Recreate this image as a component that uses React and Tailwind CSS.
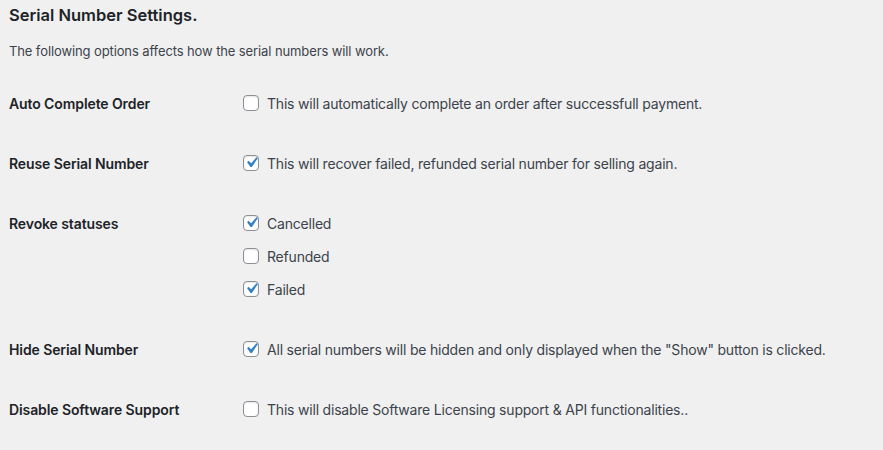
import React from "react";

function Box({ checked }) {
  return (
    <span className="relative inline-block w-4 h-4 shrink-0 rounded-[4px] border border-[#8c8f94] bg-white shadow-[inset_0_1px_2px_rgba(0,0,0,0.1)]">
      {checked && (
        <svg
          viewBox="0 0 20 20"
          className="absolute w-[21px] h-[21px] left-[-3px] top-[-4px]"
        >
          <path
            fill="#3582c4"
            d="M14.83 4.89l1.34.94-5.81 8.38H9.02L5.78 9.67l1.34-1.25 2.57 2.4z"
          />
        </svg>
      )}
    </span>
  );
}

function Item({ checked, children }) {
  return (
    <label className="flex items-center h-5 gap-2 text-[14px] tracking-[-0.2px] text-[#3c434a]">
      <Box checked={checked} />
      <span className="pt-px">{children}</span>
    </label>
  );
}

function Row({ label, children }) {
  return (
    <div className="flex py-5">
      <div className="w-[234px] shrink-0 h-5 pt-px flex items-center text-[14px] tracking-[-0.1px] font-semibold text-[#1d2327]">
        {label}
      </div>
      <div className="flex flex-col gap-[13px]">{children}</div>
    </div>
  );
}

export default function App() {
  return (
    <div
      className="min-h-[450px] bg-[#f0f0f1] pl-[9px]"
      style={{ fontFamily: "Inter, 'Noto Sans', sans-serif" }}
    >
      <h2 className="h-[30px] flex items-center text-[16.5px] font-semibold text-[#1d2327]">
        Serial Number Settings.
      </h2>
      <p className="mt-3 h-5 flex items-center text-[13px] tracking-[-0.11px] text-[#3c434a]">
        The following options affects how the serial numbers will work.
      </p>
      <div className="mt-[11px]">
        <Row label="Auto Complete Order">
          <Item>This will automatically complete an order after successfull payment.</Item>
        </Row>
        <Row label="Reuse Serial Number">
          <Item checked>This will recover failed, refunded serial number for selling again.</Item>
        </Row>
        <Row label="Revoke statuses">
          <Item checked>Cancelled</Item>
          <Item>Refunded</Item>
          <Item checked>Failed</Item>
        </Row>
        <Row label="Hide Serial Number">
          <Item checked>All serial numbers will be hidden and only displayed when the "Show" button is clicked.</Item>
        </Row>
        <Row label="Disable Software Support">
          <Item>This will disable Software Licensing support &amp; API functionalities..</Item>
        </Row>
      </div>
    </div>
  );
}
